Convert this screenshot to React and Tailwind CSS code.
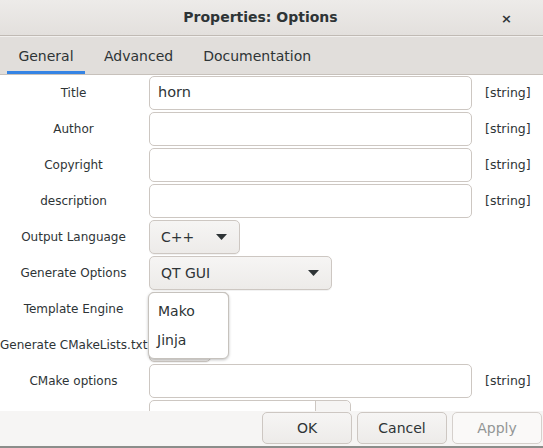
import React from "react";

const Arrow = () => (
  <svg width="11" height="6" viewBox="0 0 11 6" className="shrink-0">
    <path d="M0 0 L11 0 L5.5 6 Z" fill="#2e3436" />
  </svg>
);

function Entry({ value, w = "w-[323px]" }) {
  return (
    <div
      className={`${w} h-[34px] rounded-[5px] border border-[#cdc7c2] bg-white flex items-center px-[8px] text-[14.5px] text-[#2e3436]`}
    >
      {value}
    </div>
  );
}

function Combo({ value, w }) {
  return (
    <div
      className={`${w} h-[34px] rounded-[5px] border border-[#cdc7c2] bg-gradient-to-b from-[#f6f5f4] to-[#edebe9] flex items-center justify-between pl-[11px] pr-[12px] text-[14px] text-[#2e3436] shadow-[0_1px_0_rgba(0,0,0,0.05)]`}
    >
      <span>{value}</span>
      <Arrow />
    </div>
  );
}

function Row({ label, children, tag }) {
  return (
    <div className="flex items-center h-[34px] shrink-0">
      <div className="w-[147px] text-center text-[12px] text-[#2e3436] whitespace-nowrap">
        {label}
      </div>
      <div className="ml-[2px] flex items-center">{children}</div>
      {tag && (
        <div className="ml-[13px] text-[12.5px] text-[#2e3436]">[string]</div>
      )}
    </div>
  );
}

export default function App() {
  return (
    <div
      className="w-[543px] h-[448px] flex flex-col overflow-hidden bg-white text-[#2e3436]"
      style={{ fontFamily: '"DejaVu Sans", sans-serif' }}
    >
      {/* Title bar */}
      <div className="relative h-[36px] shrink-0 flex items-center justify-center pr-[22px] bg-gradient-to-b from-[#edebe9] to-[#e3e0dd] border-b border-[#c0bab4]">
        <span className="text-[14px] font-bold text-[#2e3436]">Properties: Options</span>
        <span className="absolute right-[31px] top-[9px] text-[13px] font-bold text-[#2e3436]">×</span>
      </div>
      {/* Tabs */}
      <div className="h-[39px] shrink-0 flex items-end bg-[#e1dedb] border-t border-[#f2f0ee] border-b border-b-[#c7c1bb] pl-[7px]">
        <div className="flex flex-col items-center w-[78px]">
          <span className="text-[14px] text-[#2e3436] leading-none mb-[8px]">General</span>
          <div className="h-[3px] w-full bg-[#3584e4]" />
        </div>
        <div className="flex flex-col items-center ml-[10px]">
          <span className="text-[14px] text-[#2e3436] leading-none mb-[11px] px-[9px]">Advanced</span>
        </div>
        <div className="flex flex-col items-center ml-[11px]">
          <span className="text-[14px] text-[#2e3436] leading-none mb-[11px] px-[10px]">Documentation</span>
        </div>
      </div>
      {/* Content */}
      <div className="relative flex-1 overflow-hidden bg-white">
        <div className="flex flex-col gap-[2px] pt-[1px]">
          <Row label="Title" tag>
            <Entry value="horn" />
          </Row>
          <Row label="Author" tag>
            <Entry />
          </Row>
          <Row label="Copyright" tag>
            <Entry />
          </Row>
          <Row label="description" tag>
            <Entry />
          </Row>
          <Row label="Output Language">
            <Combo value="C++" w="w-[91px]" />
          </Row>
          <Row label="Generate Options">
            <Combo value="QT GUI" w="w-[183px]" />
          </Row>
          <Row label="Template Engine">
            <Combo value="" w="w-[80px]" />
          </Row>
          <Row label="Generate CMakeLists.txt">
            <Combo value="" w="w-[62px]" />
          </Row>
          <Row label="CMake options" tag>
            <Entry />
          </Row>
          <Row label="">
            <div className="w-[202px] h-[34px] rounded-[5px] border border-[#cdc7c2] bg-white flex justify-end">
              <div className="w-[35px] h-full border-l border-[#cdc7c2] bg-[#f6f5f4] rounded-r-[5px]" />
            </div>
          </Row>
        </div>
        {/* Popup menu */}
        <div className="absolute left-[148px] top-[217px] w-[81px] h-[67px] bg-white rounded-[6px] border border-[#c6c2bd] shadow-[0_1px_3px_rgba(0,0,0,0.25)] flex flex-col pt-[3px]">
          <div className="h-[30px] flex items-center pl-[9px] text-[14px] text-[#2e3436]">Mako</div>
          <div className="h-[29px] flex items-center pl-[8px] text-[14px] text-[#2e3436]">Jinja</div>
        </div>
      </div>
      {/* Button bar */}
      <div className="h-[37px] shrink-0 bg-[#f6f5f4] border-b-2 border-[#8b8d8a] flex items-start justify-end pt-[1px] pr-[1px] gap-[5px]">
        <div className="w-[90px] h-[32px] rounded-[5px] border border-[#cdc7c2] bg-gradient-to-b from-[#f6f5f4] to-[#edebe9] flex items-center justify-center text-[14px] text-[#2e3436]">
          OK
        </div>
        <div className="w-[90px] h-[32px] rounded-[5px] border border-[#cdc7c2] bg-gradient-to-b from-[#f6f5f4] to-[#edebe9] flex items-center justify-center text-[14px] text-[#2e3436]">
          Cancel
        </div>
        <div className="w-[90px] h-[32px] rounded-[5px] border border-[#d5d0cc] bg-[#faf9f8] flex items-center justify-center text-[14px] text-[#929595]">
          Apply
        </div>
      </div>
    </div>
  );
}
